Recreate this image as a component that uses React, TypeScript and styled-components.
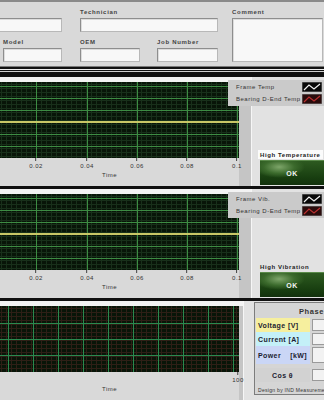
import React from 'react';
import styled, { createGlobalStyle } from 'styled-components';

const GlobalStyle = createGlobalStyle`
  html, body { margin: 0; padding: 0; background: #d6d6d6; }
  body { font-family: "Liberation Sans", Arial, sans-serif; }
`;

const Screen = styled.div`
  width: 324px;
  height: 400px;
  overflow: hidden;
  background: #d6d6d6;
  display: flex;
  flex-direction: column;
`;

/* ---------- header form ---------- */

const Header = styled.div`
  flex: none;
  height: 66px;
  box-sizing: border-box;
  border-top: 2px solid #8a8a8a;
  padding: 6px 1px 0 0;
  background: #d9d9d9;
  display: grid;
  grid-template-columns: 62px 18px 60px 17px 61px 14px 1fr;
  grid-template-rows: 10px 14px 16px 14px;
  overflow: hidden;
`;

const Label = styled.span<{ $col: string; $row: string; $indent?: number }>`
  grid-column: ${p => p.$col};
  grid-row: ${p => p.$row};
  align-self: end;
  padding: 0 0 2px ${p => p.$indent ?? 0}px;
  font-size: 6px;
  line-height: 7px;
  font-weight: bold;
  letter-spacing: 0.7px;
  color: #444;
  white-space: nowrap;
`;

const Field = styled.div<{ $col: string; $row: string; $indent?: number }>`
  grid-column: ${p => p.$col};
  grid-row: ${p => p.$row};
  margin-left: ${p => p.$indent ?? 0}px;
  background: #f8f8f8;
  border: 1px solid #b8b8b8;
  border-top-color: #8e8e8e;
  border-left-color: #8e8e8e;
  box-shadow: inset 1px 1px 0 #dcdcdc;
`;

const Rule = styled.div`
  flex: none;
  height: 8px;
  box-sizing: border-box;
  border-top: 1px solid #7a7a7a;
  border-bottom: 2px solid #111;
  background: linear-gradient(#111 0 2px, #eeeeee 2px 3px, #111 3px 4px, #cfcfcf 4px);
`;

/* ---------- chart panels ---------- */

const Panel = styled.section<{ $h: number }>`
  position: relative;
  flex: none;
  height: ${p => p.$h}px;
  box-sizing: border-box;
  border-top: 3px solid #101010;
  display: flex;
`;

const PlotSide = styled.div`
  width: 239px;
  display: flex;
  flex-direction: column;
  background: #d9d9d9;
`;

const Strip = styled.div`
  height: 5px;
  background: #f3f3f3;
`;

const Svg = styled.svg`
  display: block;
`;

const AxisRow = styled.div`
  position: relative;
  flex: 1;
  display: flex;
  justify-content: center;
  padding: 14px 20px 0 0;
  font-size: 6px;
  line-height: 7px;
  letter-spacing: 0.5px;
  color: #333;
`;

const Tick = styled.span`
  position: absolute;
  top: 0;
  transform: translateX(-50%);
  display: flex;
  flex-direction: column;
  align-items: center;
  &::before {
    content: '';
    width: 1px;
    height: 3px;
    margin-bottom: 2px;
    background: #444;
  }
`;

const Gutter = styled.div`
  width: 12px;
  background: linear-gradient(#f3f3f3 0 5px, #c5c5c5 5px);
  border-right: 1px solid #f6f6f6;
`;

const SideCol = styled.div`
  flex: 1;
  background: #e2e2e2;
  display: flex;
  flex-direction: column;
  justify-content: flex-end;
  align-items: flex-start;
`;

const AlarmLabel = styled.span<{ $boxed?: boolean }>`
  margin: 0 0 1px 6px;
  padding: 1px 2px 0;
  background: ${p => (p.$boxed ? '#fbfbfb' : 'transparent')};
  font-size: 6px;
  line-height: 8px;
  font-weight: bold;
  letter-spacing: 0.6px;
  color: #222;
  white-space: nowrap;
`;

const OkButton = styled.div`
  margin: 0 0 1px 8px;
  width: 64px;
  height: 24px;
  display: flex;
  align-items: center;
  justify-content: center;
  background: radial-gradient(ellipse 40% 45% at 30% 25%, #7ea66a 0%, #3b6a2c 60%, transparent 100%),
    linear-gradient(#2d5a20, #183e10 70%, #12300c);
  border-top: 1px solid #5a8a4a;
  color: #f2f2f2;
  font-size: 7px;
  font-weight: bold;
  letter-spacing: 0.5px;
`;

const Legend = styled.div`
  position: absolute;
  left: 228px;
  top: 3px;
  width: 96px;
  height: 26px;
  box-sizing: border-box;
  padding: 2px 2px 2px 8px;
  background: #cacaca;
  display: grid;
  grid-template-columns: 1fr 20px;
  grid-auto-rows: 10px;
  row-gap: 2px;
  align-items: center;
  font-size: 6px;
  letter-spacing: 0.5px;
  color: #333;
  white-space: nowrap;
`;

/* ---------- phase table ---------- */

const Table = styled.div`
  margin: 1px 0 5px 10px;
  width: 70px;
  height: 93px;
  box-sizing: border-box;
  border: 1px solid #7c7c7c;
  border-right: none;
  background: #d5d5d5;
  padding: 0 0 0 1px;
  display: grid;
  grid-template-columns: 54px 18px;
  grid-template-rows: 15px 14px 14px 18px 4px 14px 1fr;
  column-gap: 2px;
  overflow: hidden;
`;

const PhaseHead = styled.div`
  grid-column: 1 / 3;
  padding: 4px 0 0 43px;
  font-size: 7.5px;
  font-weight: bold;
  letter-spacing: 0.6px;
  color: #333;
  white-space: nowrap;
`;

const RowLabel = styled.div<{ $bg: string; $center?: boolean }>`
  display: flex;
  align-items: center;
  justify-content: ${p => (p.$center ? 'center' : 'space-between')};
  padding: 0 3px 0 2px;
  background: ${p => p.$bg};
  font-size: 7px;
  font-weight: bold;
  letter-spacing: 0.4px;
  color: #1c1c30;
  white-space: nowrap;
`;

const ValueCell = styled.div`
  margin: 1px 0;
  background: #f2f2f2;
  border: 1px solid #9a9a9a;
`;

const Credit = styled.div`
  grid-column: 1 / 3;
  padding: 5px 0 0 2px;
  font-size: 5px;
  letter-spacing: 0.3px;
  color: #333;
  white-space: nowrap;
`;

/* ---------- drawings ---------- */

type PlotProps = {
  w: number;
  h: number;
  vx: number[];
  hy: number[];
  minor: string;
  major: string;
  trace?: number;
};

const lines = (xs: number[], ys: number[], w: number, h: number) =>
  xs.map(x => `M${x + 0.5} 0V${h}`).join('') + ys.map(y => `M0 ${y + 0.5}H${w}`).join('');

const steps = (from: number, to: number, step: number) => {
  const out: number[] = [];
  for (let v = from; v < to; v += step) out.push(v);
  return out;
};

const Plot: React.FC<PlotProps> = ({ w, h, vx, hy, minor, major, trace }) => (
  <Svg width={w} height={h}>
    <rect width={w} height={h} fill="#081508" />
    <path d={lines(steps(1, w, 5), steps(2, h, 4), w, h)} stroke={minor} strokeWidth={1} />
    <path d={lines(vx, hy, w, h)} stroke={major} strokeWidth={1} />
    {trace !== undefined && <path d={`M0 ${trace}H${w}`} stroke="#c9c766" strokeWidth={2} />}
  </Svg>
);

const LegendIcon: React.FC<{ bg: string; line: string }> = ({ bg, line }) => (
  <Svg width={20} height={10}>
    <rect width={20} height={10} fill={bg} stroke="#777" />
    <polyline points="2,8 7,3 12,7 18,2" fill="none" stroke={line} strokeWidth={1.2} />
  </Svg>
);

const timeTicks = [
  { x: 36, t: '0.02' },
  { x: 87, t: '0.04' },
  { x: 137, t: '0.06' },
  { x: 187, t: '0.08' },
  { x: 237, t: '0.1' },
];

const scopeX = [36, 87, 137, 187, 237];
const scopeY = [4, 16, 28, 52, 64];

const ScopePanel: React.FC<{ legend: string; alarm: string; boxed?: boolean }> = ({ legend, alarm, boxed }) => (
  <Panel $h={112}>
    <PlotSide>
      <Strip />
      <Plot w={239} h={76} vx={scopeX} hy={scopeY} minor="#18301a" major="#3d8c43" trace={40} />
      <AxisRow>
        {timeTicks.map(t => (
          <Tick key={t.t} style={{ left: t.x }}>
            {t.t}
          </Tick>
        ))}
        Time
      </AxisRow>
    </PlotSide>
    <Gutter />
    <SideCol>
      <AlarmLabel $boxed={boxed}>{alarm}</AlarmLabel>
      <OkButton>OK</OkButton>
    </SideCol>
    <Legend>
      <span>{legend}</span>
      <LegendIcon bg="#080808" line="#f0f0f0" />
      <span>Bearing D-End Temp</span>
      <LegendIcon bg="#2a0c0c" line="#b83030" />
    </Legend>
  </Panel>
);

export default function App() {
  return (
    <>
      <GlobalStyle />
      <Screen>
        <Header>
          <Field $col="1" $row="2" $indent={-20} />
          <Label $col="3 / 6" $row="1">Technician</Label>
          <Field $col="3 / 6" $row="2" />
          <Label $col="7" $row="1">Comment</Label>
          <Field $col="7" $row="2 / 5" />
          <Label $col="1" $row="3" $indent={3}>Model</Label>
          <Field $col="1" $row="4" $indent={3} />
          <Label $col="3" $row="3">OEM</Label>
          <Field $col="3" $row="4" />
          <Label $col="5" $row="3">Job Number</Label>
          <Field $col="5" $row="4" />
        </Header>
        <Rule />

        <ScopePanel legend="Frame Temp" alarm="High Temperature" boxed />
        <ScopePanel legend="Frame Vib." alarm="High Vibration" />

        <Panel $h={102}>
          <PlotSide>
            <Strip />
            <Plot
              w={239}
              h={66}
              vx={steps(8, 239, 25)}
              hy={[17, 33, 49]}
              minor="#2e1f16"
              major="#2a8a4e"
            />
            <AxisRow>
              <Tick style={{ left: 238 }}>100</Tick>
              Time
            </AxisRow>
          </PlotSide>
          <Gutter />
          <SideCol>
            <Table>
              <PhaseHead>Phase</PhaseHead>
              <RowLabel $bg="#f6ef9e">Voltage [V]</RowLabel>
              <ValueCell />
              <RowLabel $bg="#c4f0f8">Current [A]</RowLabel>
              <ValueCell />
              <RowLabel $bg="#cad6f6">
                <span>Power</span>
                <span>[kW]</span>
              </RowLabel>
              <ValueCell />
              <span />
              <span />
              <RowLabel $bg="#d2d2d2" $center>Cos θ</RowLabel>
              <ValueCell />
              <Credit>Design by IND Measurement</Credit>
            </Table>
          </SideCol>
        </Panel>
      </Screen>
    </>
  );
}
